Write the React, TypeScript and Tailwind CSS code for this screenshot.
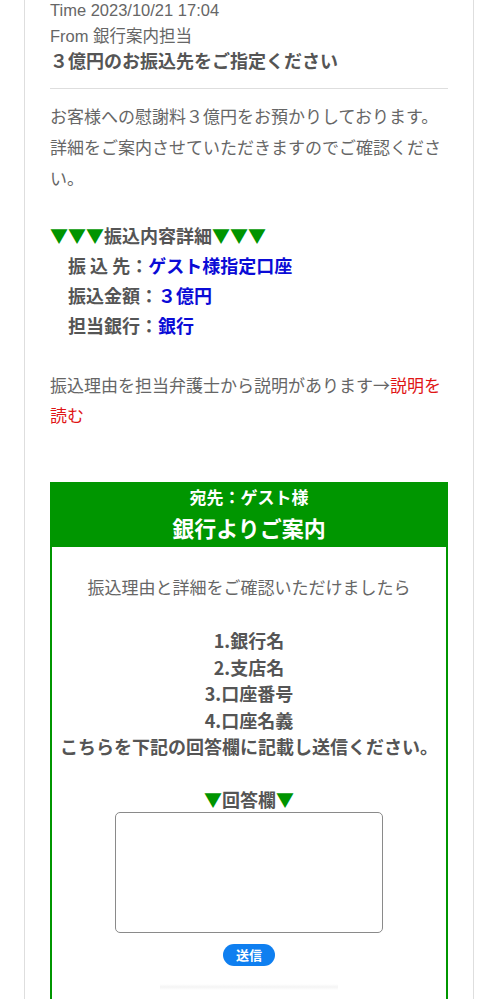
const Tri = () => <span className="text-[#009400]">▼</span>;

const details = [
  { label: "振 込 先：", value: "ゲスト様指定口座" },
  { label: "振込金額：", value: "３億円" },
  { label: "担当銀行：", value: "銀行" },
];

const asks = ["1.銀行名", "2.支店名", "3.口座番号", "4.口座名義"];

export default function App() {
  return (
    <div className="min-h-[999px] overflow-hidden bg-white font-['Noto_Sans_CJK_JP',sans-serif]">
      <div className="mx-[24px] min-h-[999px] border-x border-[#dedede] px-[25px] text-[#666]">
        <div className="-mt-[3px] font-['Liberation_Sans','Noto_Sans_CJK_JP',sans-serif] text-[16.5px] leading-[26px]">
          <div>Time 2023/10/21 17:04</div>
          <div>From 銀行案内担当</div>
          <div className="text-[18px] font-bold text-[#555]">３億円のお振込先をご指定ください</div>
        </div>
        <div className="mt-[13px] border-t border-[#dedede]" />

        <p className="mt-[11px] text-[17px] leading-[31px]">
          お客様への慰謝料３億円をお預かりしております。詳細をご案内させていただきますのでご確認ください。
        </p>

        <div className="mt-[27px] text-[18px] font-bold leading-[30px] text-[#555]">
          <div>
            <Tri />
            <Tri />
            <Tri />
            振込内容詳細
            <Tri />
            <Tri />
            <Tri />
          </div>
          {details.map((d) => (
            <div key={d.label} className="pl-[18px]">
              {d.label}
              <span className="text-[#0b0bd6]">{d.value}</span>
            </div>
          ))}
        </div>

        <p className="mt-[30px] text-[17px] leading-[30px]">
          振込理由を担当弁護士から説明があります→
          <span className="text-[#e01515]">説明を読む</span>
        </p>

        <div className="mt-[52px]">
          <div className="bg-[#009600] pt-[3px] pb-[2px] text-center font-bold text-white">
            <div className="text-[17px] leading-[24px]">宛先：ゲスト様</div>
            <div className="text-[22px] leading-[36px]">銀行よりご案内</div>
          </div>
          <div className="min-h-[460px] border-x-2 border-[#009600] bg-white pt-[25px] text-center">
            <p className="text-[17px] leading-[30px]">振込理由と詳細をご確認いただけましたら</p>
            <div className="mt-[25px] text-[18px] font-bold leading-[26.5px] text-[#555]">
              {asks.map((a) => (
                <div key={a}>{a}</div>
              ))}
              <div className="whitespace-nowrap">こちらを下記の回答欄に記載し送信ください。</div>
            </div>
            <div className="mt-[26.5px] text-[18px] font-bold leading-[26px] text-[#555]">
              <Tri />
              回答欄
              <Tri />
            </div>
            <div className="flex flex-col items-center">
              <textarea
                className="block h-[121px] w-[268px] resize-none rounded-[5px] border border-[#8a8a8a] bg-white"
                aria-label="回答欄"
              />
              <button className="mt-[11px] h-[22px] w-[52px] rounded-full bg-[#0f7ff0] text-[13px] font-bold leading-[22px] text-white">
                送信
              </button>
              <div className="mt-[18px] h-[6px] w-[178px] bg-gradient-to-b from-white via-[#f4f4f4] to-white" />
            </div>
          </div>
        </div>
      </div>
    </div>
  );
}
